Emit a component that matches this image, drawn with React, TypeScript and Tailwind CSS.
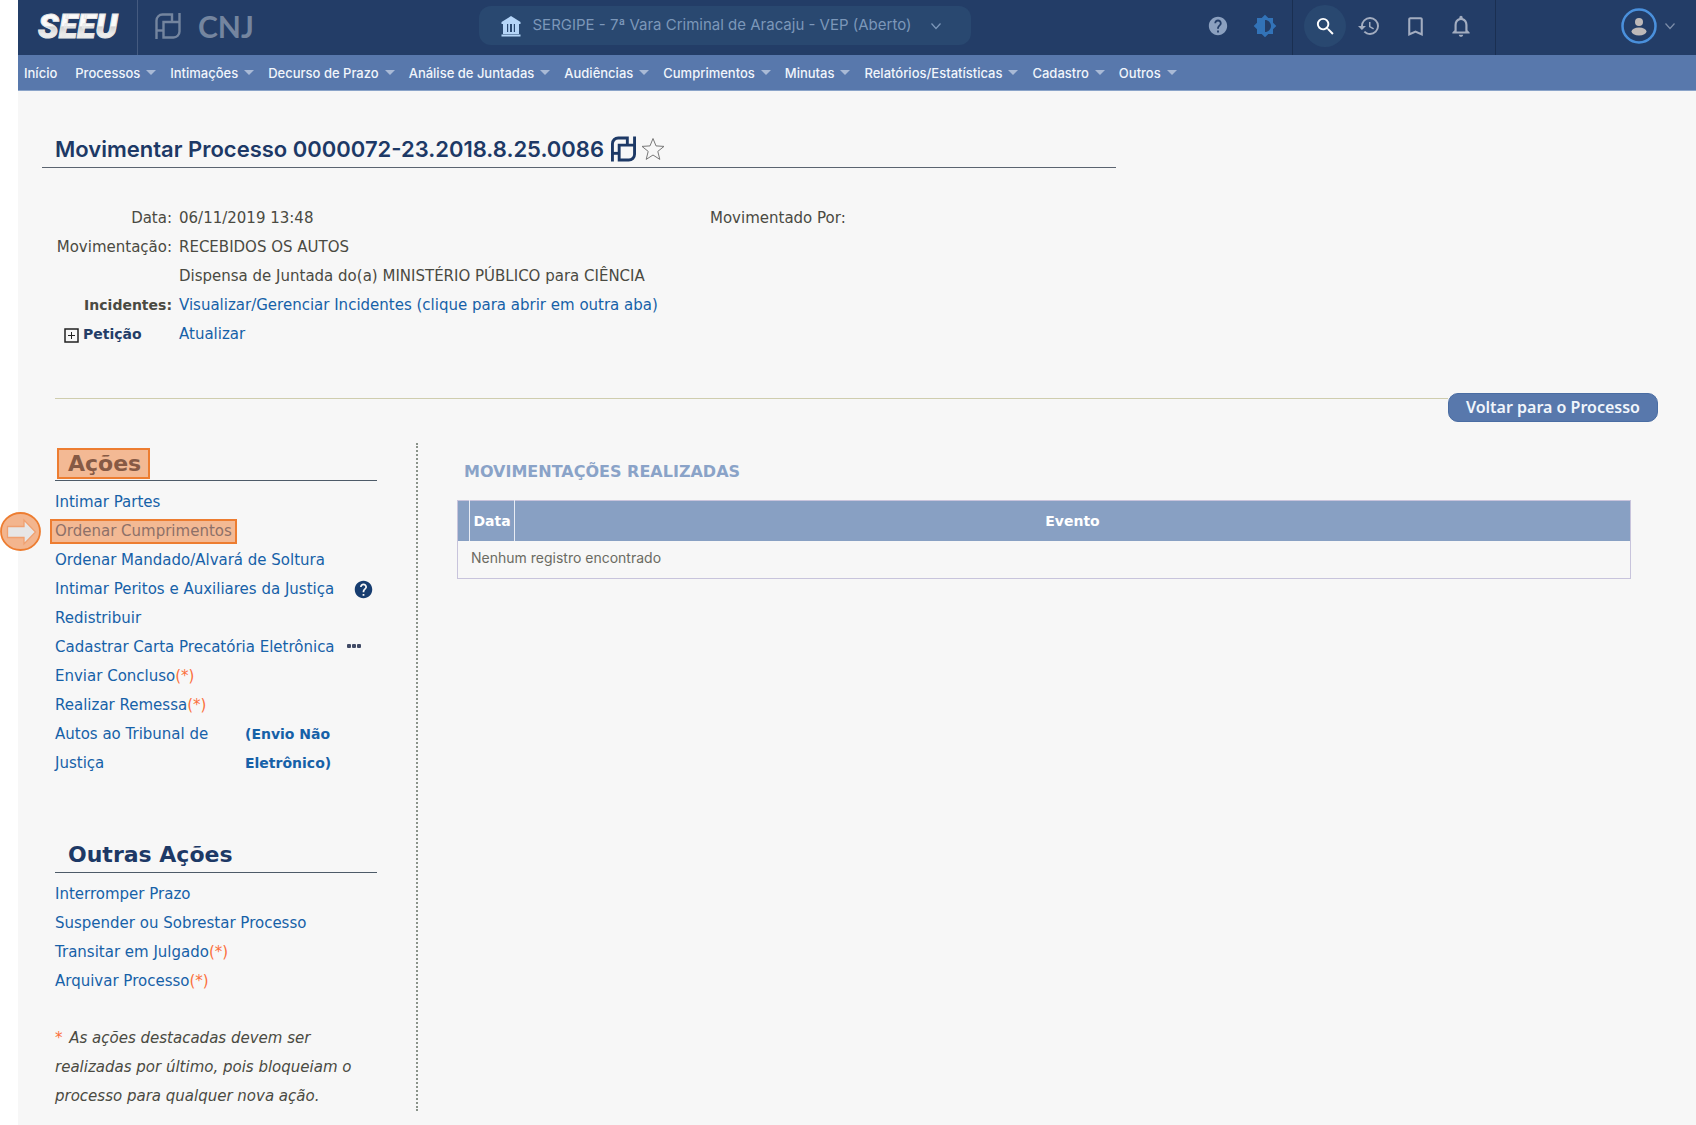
import React from "react";
import {
    MdBookmarkBorder,
    MdBrightness6,
    MdHelp,
    MdHistory,
    MdNotificationsNone,
    MdSearch,
} from "react-icons/md";

const menu = [
    "Início",
    "Processos",
    "Intimações",
    "Decurso de Prazo",
    "Análise de Juntadas",
    "Audiências",
    "Cumprimentos",
    "Minutas",
    "Relatórios/Estatísticas",
    "Cadastro",
    "Outros",
];

const otherActions = [
    { label: "Interromper Prazo" },
    { label: "Suspender ou Sobrestar Processo" },
    { label: "Transitar em Julgado", blocks: true },
    { label: "Arquivar Processo", blocks: true },
];

function CnjMark({ className }: { className: string }) {
    return (
        <svg viewBox="0 0 26 26" className={className} fill="none" stroke="currentColor" aria-hidden="true">
            <path d="M1.500 26V7.500a6 6 0 0 1 6-6H17V9" />
            <path d="M1.500 17.500H8.500" />
            <path d="M24.500 0V18.500a6 6 0 0 1-6 6H8.500V9H24.500" />
        </svg>
    );
}

function Chevron({ className }: { className: string }) {
    return (
        <svg viewBox="0 0 10 8" className={className} fill="none" stroke="currentColor" strokeWidth="1.2" aria-hidden="true">
            <path d="M0.500 1.500 5 6.500 9.500 1.500" />
        </svg>
    );
}

function CourtIcon({ className }: { className: string }) {
    return (
        <svg viewBox="0 0 20 22" className={className} fill="currentColor" aria-hidden="true">
            <path d="M10 1 19.500 7v2h-19V7z" />
            <path d="M2 9h4v8H2zM7.200 9H9v8H7.200zM11 9h1.800v8H11zM14 9h4v8h-4z" />
            <path d="M2 17h16v2H2zM0.500 19.500h19v2h-19z" />
        </svg>
    );
}

function ActionItem({ label, blocks = false, children }: { label: string; blocks?: boolean; children?: React.ReactNode }) {
    return (
        <li className="flex items-center">
            <a href="#" className="text-[#1661a8]">{label}</a>
            {blocks && <span className="text-[#fb6f3c]">(*)</span>}
            {children}
        </li>
    );
}

function Header() {
    return (
        <header className="flex h-[55px] items-center bg-[#233d67]">
            <div className="flex h-full w-[120px] items-center justify-center border-r border-[#455b80] pb-1">
                <svg viewBox="0 0 92 40" className="h-[40px] w-[92px]" role="img" aria-label="SEEU">
                    <defs>
                        <linearGradient id="seeu" x1="0" y1="0" x2="0" y2="1">
                            <stop offset="0.500" stopColor="#fafafa" />
                            <stop offset="0.520" stopColor="#cfcfcf" />
                            <stop offset="0.700" stopColor="#ececec" />
                        </linearGradient>
                    </defs>
                    <text x="6" y="32" fontFamily="Roboto" fontSize="34" fontWeight="900" fontStyle="italic" fill="url(#seeu)" stroke="#e8e8e8" strokeWidth="1">SEEU</text>
                </svg>
            </div>
            <div className="flex h-full items-center pb-1">
                <CnjMark className="ml-[17px] h-[26px] w-[26px] stroke-[2.4] text-[#74859f]" />
                <span className="ml-[17px] w-[56px] font-['Lato'] text-[30px] leading-none font-bold text-[#74859f]">CNJ</span>
            </div>

            <div className="flex h-full flex-1 items-center justify-center pr-3 pb-1">
                <button className="flex h-[39px] w-[492px] items-center rounded-xl bg-[#294870] pl-[22px] font-['Inter'] text-[15px] text-[#7c97b9]">
                    <CourtIcon className="mr-3 h-[22px] w-[20px] text-[#b5d5f8]" />
                    SERGIPE - 7ª Vara Criminal de Aracaju - VEP (Aberto)
                    <Chevron className="ml-5 h-2 w-[10px]" />
                </button>
            </div>

            <div className="flex h-full items-center gap-6 pr-[15px] pb-1 text-[#8ba0bf]">
                <button aria-label="Ajuda"><MdHelp className="size-[22px]" /></button>
                <button aria-label="Contraste"><MdBrightness6 className="size-[24px] text-[#3273b8]" /></button>
            </div>
            <div className="flex h-full items-center border-l border-[#1a2f51] pr-[21px] pb-[3px] pl-[11px] text-[#a3adc0]">
                <button aria-label="Pesquisar" className="flex size-[42px] items-center justify-center rounded-full bg-[#294870] text-white">
                    <MdSearch className="size-[23px]" />
                </button>
                <button aria-label="Histórico" className="ml-[11px]"><MdHistory className="size-[24px]" /></button>
                <button aria-label="Favoritos" className="ml-[22px]"><MdBookmarkBorder className="size-[25px]" /></button>
                <button aria-label="Notificações" className="ml-[20px]"><MdNotificationsNone className="size-[26px]" /></button>
            </div>
            <div className="flex h-full w-[201px] items-center justify-end border-l border-[#1a2f51] pr-[21px] pb-1">
                <button aria-label="Usuário" className="flex items-center gap-2 text-[#7c8da9]">
                    <svg viewBox="0 0 36 36" className="size-[36px]" aria-hidden="true">
                        <circle cx="18" cy="18" r="16.500" fill="none" stroke="#4a90dc" strokeWidth="2.500" />
                        <circle cx="18" cy="14" r="4" fill="#beb9b9" />
                        <ellipse cx="18" cy="23.500" rx="7.500" ry="4" fill="#beb9b9" />
                    </svg>
                    <Chevron className="h-2 w-[10px]" />
                </button>
            </div>
        </header>
    );
}

function ProcessInfo() {
    return (
        <section className="mt-[36px] ml-[37px] grid grid-cols-[117px_524px_1fr] gap-x-[7px] leading-[29px]">
            <span className="text-right">Data:</span>
            <span>06/11/2019 13:48</span>
            <span>Movimentado Por:</span>

            <span className="text-right">Movimentação:</span>
            <span className="col-span-2">RECEBIDOS OS AUTOS</span>

            <span className="col-span-2 col-start-2">Dispensa de Juntada do(a) MINISTÉRIO PÚBLICO para CIÊNCIA</span>

            <strong className="text-right text-sm leading-[29px]">Incidentes:</strong>
            <a href="#" className="col-span-2 text-[#1661a8]">Visualizar/Gerenciar Incidentes (clique para abrir em outra aba)</a>

            <button className="flex items-center gap-1 pl-[9px] text-sm leading-[29px] font-bold text-[#233d67]">
                <svg viewBox="0 0 15 15" className="mt-[2px] size-[15px]" fill="none" stroke="#222" aria-hidden="true">
                    <path d="M1 1h13v13H1z" strokeWidth="1.500" />
                    <path d="M4 7.500h7M7.500 4v7" />
                </svg>
                Petição
            </button>
            <a href="#" className="col-span-2 text-[#1661a8]">Atualizar</a>
        </section>
    );
}

function Actions() {
    return (
        <aside className="w-[363px] border-r-2 border-dotted border-[#8a938a] pr-[39px] leading-[29px]">
            <h2 className="flex h-[38px] items-end border-b border-[#4d5b68] pl-[2px]">
                <span className="mb-px border-2 border-[#ed7d31] bg-[#f3b994] pr-[7px] pl-[9px] text-[22px] leading-[27px] font-bold text-[#865a45]">Ações</span>
            </h2>
            <ul className="mt-[7px]">
                <ActionItem label="Intimar Partes" />
                <li className="relative flex h-[29px] items-center">
                    <a href="#" className="-ml-[5px] border-2 border-[#ed7d31] bg-[#f3b994] px-[3px] leading-[21px] text-[#8d7068]">
                        Ordenar Cumprimentos
                    </a>
                    {/* pointer to the highlighted action */}
                    <svg viewBox="0 0 41 39" className="absolute -left-[55px] h-[39px] w-[41px]" aria-hidden="true">
                        <ellipse cx="20.500" cy="19.500" rx="19.500" ry="18.500" fill="#f3b58e" stroke="#ed7d31" strokeWidth="1.800" />
                        <path d="M7.500 14.500H24V8l11.500 12L24 32V25.500H7.500z" fill="#e7e6e6" stroke="#f0a070" strokeWidth="1.300" />
                    </svg>
                </li>
                <ActionItem label="Ordenar Mandado/Alvará de Soltura" />
                <ActionItem label="Intimar Peritos e Auxiliares da Justiça">
                    <button aria-label="Ajuda" className="ml-auto pr-[3px] text-[#173d70]"><MdHelp className="size-[21px]" /></button>
                </ActionItem>
                <ActionItem label="Redistribuir" />
                <ActionItem label="Cadastrar Carta Precatória Eletrônica">
                    <button aria-label="Mais opções" className="mr-4 mb-1 ml-auto flex gap-px">
                        <span className="size-1 rounded-[1px] bg-[#414b66]" />
                        <span className="size-1 rounded-[1px] bg-[#414b66]" />
                        <span className="size-1 rounded-[1px] bg-[#414b66]" />
                    </button>
                </ActionItem>
                <ActionItem label="Enviar Concluso" blocks />
                <ActionItem label="Realizar Remessa" blocks />
                <li>
                    <a href="#" className="flex text-[#1661a8]">
                        <span className="w-[190px] pr-8">Autos ao Tribunal de Justiça</span>
                        <strong className="w-[110px] text-sm leading-[29px]">(Envio Não Eletrônico)</strong>
                    </a>
                </li>
            </ul>

            <h2 className="mt-[63px] border-b border-[#4d5b68] pb-[3px] pl-[13px] text-[22px] leading-[28px] font-bold text-[#1d3966]">
                Outras Ações
            </h2>
            <ul className="mt-[7px]">
                {otherActions.map((action) => (
                    <ActionItem key={action.label} {...action} />
                ))}
            </ul>
            <p className="mt-[28px] pr-4 italic">
                <span className="mr-[2px] text-[#fb6f3c] not-italic">*</span> As ações destacadas devem ser realizadas por último, pois bloqueiam o processo para qualquer nova ação.
            </p>
        </aside>
    );
}

function Movements() {
    return (
        <section className="min-w-0 flex-1 pt-[17px] pr-[27px] pl-[39px]">
            <h3 className="pl-[7px] text-base leading-6 font-bold text-[#8aa3c8]">MOVIMENTAÇÕES REALIZADAS</h3>
            <table className="mt-[16px] w-full border-collapse border border-[#c8c4dc] text-sm">
                <thead>
                    <tr className="h-[40px] bg-[#88a0c3] text-white">
                        <th className="w-[12px] border-r border-[#e8ecf4]"></th>
                        <th className="w-[45px] border-r border-[#e8ecf4]">Data</th>
                        <th>Evento</th>
                    </tr>
                </thead>
                <tbody>
                    <tr className="h-[38px]">
                        <td colSpan={3} className="pb-[2px] pl-[13px] font-['Inter'] text-[#6b6b62]">Nenhum registro encontrado</td>
                    </tr>
                </tbody>
            </table>
        </section>
    );
}

export default function App() {
    return (
        <div className="min-h-screen bg-white pl-[18px]">
            <div className="min-h-screen bg-[#f7f7f7] pb-[14px] font-['DejaVu_Sans',sans-serif] text-[15px] text-[#4a4a42]">
                <Header />

                <nav className="flex h-[36px] items-center gap-[14px] border-b border-[#8ba4c9] bg-[#5878ac] pt-[2px] pl-[6px] font-['Inter'] text-[13px] font-medium text-[#f1f5fb]">
                    {menu.map((item, i) => (
                        <a key={item} href="#" className={i === 0 ? "mr-1" : "flex items-center gap-[6px]"}>
                            {item}
                            {i > 0 && (
                                <svg viewBox="0 0 10 5" className="mb-[2px] h-[5px] w-[10px]" fill="#a9bad6" aria-hidden="true">
                                    <path d="M0 0h10L5 5z" />
                                </svg>
                            )}
                        </a>
                    ))}
                </nav>

                <main className="pt-[40px]">
                    <h1 className="ml-6 flex h-[37px] w-[64%] items-center border-b border-[#5b6470] pl-[13px] font-['Inter'] text-[22px] font-semibold text-[#1d3966]">
                        Movimentar Processo 0000072-23.2018.8.25.0086
                        <CnjMark className="ml-[7px] h-[26px] w-[25px] stroke-3" />
                        <button aria-label="Favoritar processo" className="ml-[5px]">
                            <svg viewBox="0 0 24 24" className="size-[24px]" fill="none" stroke="#777" strokeWidth="1" aria-hidden="true">
                                <path d="M12 1.500l3 7.400 8 .500-6.200 5 2 8L12 18l-6.800 4.400 2-8L1 9.400l8-.500z" />
                            </svg>
                        </button>
                    </h1>

                    <ProcessInfo />

                    <div className="mr-[38px] ml-[37px]">
                        <div className="mt-[44px] flex items-start">
                            <div className="mt-[5px] h-px flex-1 bg-[#cfcdae]" />
                            <a href="#" className="flex h-[29px] items-center rounded-[10px] border border-[#4a6da3] bg-[#5878ac] px-[17px] pb-[2px] font-['Noto_Sans'] text-base font-semibold text-[#f1f5fb]">
                                Voltar para o Processo
                            </a>
                        </div>

                        <div className="mt-[21px] flex">
                            <Actions />
                            <Movements />
                        </div>
                    </div>
                </main>
            </div>
        </div>
    );
}
